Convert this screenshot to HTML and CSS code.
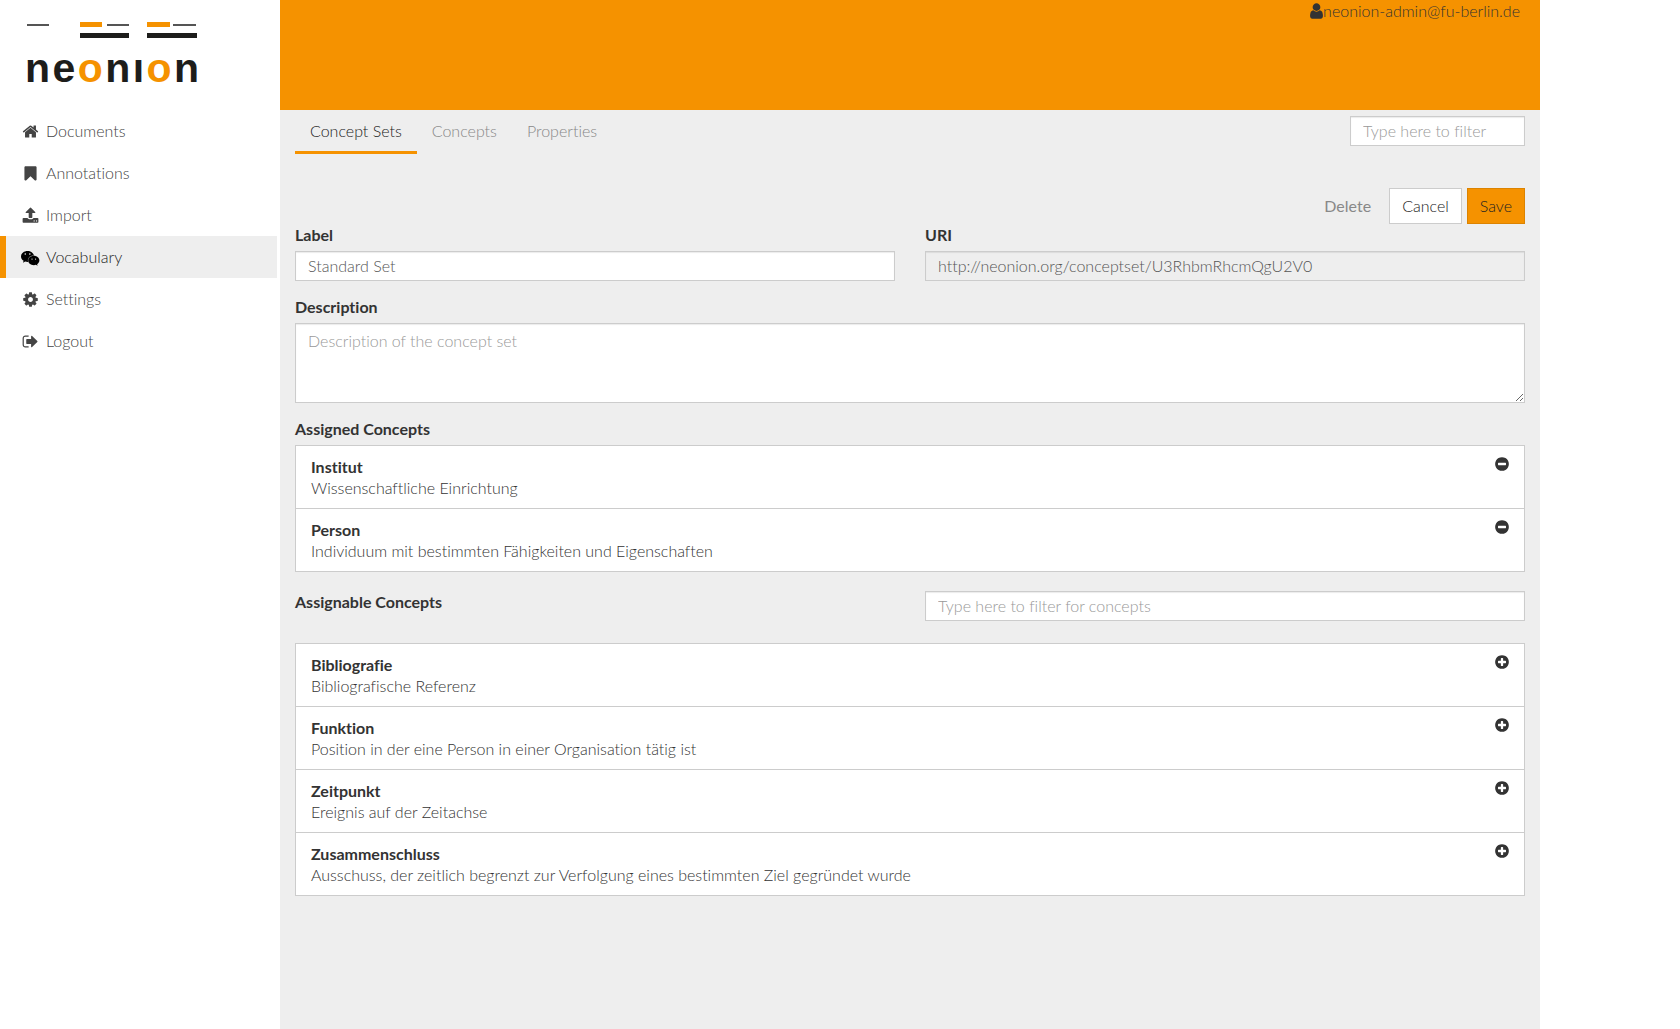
FILE: index.html
```html
<!DOCTYPE html>
<html lang="en">
<head>
<meta charset="utf-8">
<title>neonion – Vocabulary</title>
<link rel="stylesheet" href="styles.css">
</head>
<body>
<svg class="sprite" aria-hidden="true">
  <symbol id="home" viewBox="0 0 1664 1792"><path d="M1408 992v480q0 26-19 45t-45 19H960v-384H704v384H320q-26 0-45-19t-19-45V992q0-1 .5-3t.5-3l575-474 575 474q1 2 1 6zm223-69l-62 74q-8 9-21 11h-3q-13 0-21-7L832 424l-692 577q-12 8-24 7-13-2-21-11l-62-74q-8-10-7-23.500t11-21.500l719-599q32-26 76-26t76 26l244 204V288q0-14 9-23t23-9h192q14 0 23 9t9 23v408l219 182q10 8 11 21.500t-7 23.500z"/></symbol>
  <symbol id="bookmark" viewBox="0 0 1280 1792"><path d="M1164 256q23 0 44 9 33 13 52.500 41t19.500 62v1289q0 34-19.500 62t-52.500 41q-19 8-44 8-48 0-83-32L640 1312l-441 424q-36 33-83 33-23 0-44-9-33-13-52.500-41T0 1657V368q0-34 19.500-62T72 265q21-9 44-9z" transform="translate(0 -128)"/></symbol>
  <symbol id="upload" viewBox="0 0 1664 1792"><path d="M1280 1472q0-26-19-45t-45-19-45 19-19 45 19 45 45 19 45-19 19-45zm256 0q0-26-19-45t-45-19-45 19-19 45 19 45 45 19 45-19 19-45zm128-224v320q0 40-28 68t-68 28H96q-40 0-68-28t-28-68v-320q0-40 28-68t68-28h427q21 56 70.500 92t110.500 36h256q61 0 110.500-36t70.500-92h427q40 0 68 28t28 68zm-325-648q-17 40-59 40h-256v448q0 26-19 45t-45 19H704q-26 0-45-19t-19-45V640H384q-42 0-59-40-17-39 14-69l448-448q18-19 45-19t45 19l448 448q31 30 14 69z"/></symbol>
  <symbol id="chat" viewBox="0 0 2048 1792"><path fill-rule="evenodd" d="M700 200C310 200 0 455 0 785c0 190 105 345 280 465l-70 210 244-122c87 17 157 35 246 35 22 0 44-1 65-3-14-47-22-96-22-147 0-301 259-546 586-546 22 0 45 2 67 4C1336 400 1043 200 700 200zM461 430a86 86 0 1 1 0 172 86 86 0 0 1 0-172zm489 0a86 86 0 1 1 0 172 86 86 0 0 1 0-172zM1392 720c-370 0-622 233-622 502 0 276 252 502 622 502 70 0 140-17 208-34l190 104-52-173c140-105 244-244 244-399 0-269-270-502-590-502zm-205 275a70 70 0 1 1 0 140 70 70 0 0 1 0-140zm380 0a70 70 0 1 1 0 140 70 70 0 0 1 0-140z"/></symbol>
  <symbol id="cog" viewBox="0 0 1536 1792"><path d="M1024 896q0-106-75-181t-181-75-181 75-75 181 75 181 181 75 181-75 75-181zm512-109v222q0 12-8 23t-20 13l-185 28q-19 54-39 91 35 50 107 138 10 12 10 25t-9 23q-27 37-99 108t-94 71q-12 0-26-9l-138-108q-44 23-91 38-16 136-29 186-7 28-36 28H657q-14 0-24.500-8.500T621 1634l-28-184q-49-16-90-37l-141 107q-10 9-25 9-14 0-25-11-126-114-165-168-7-10-7-23 0-12 8-23 15-21 51-66.500t54-70.500q-27-50-41-99L29 1040q-13-2-21-12.500T0 1004V782q0-12 8-23t19-13l186-28q14-46 39-92-40-57-107-138-10-12-10-24 0-10 9-23 26-36 98.500-107.500T337 262q13 0 26 10l138 107q44-23 91-38 16-136 29-186 7-28 36-28h222q14 0 24.500 8.500T915 157l28 184q49 16 90 37l142-107q9-9 24-9 13 0 25 10 129 119 165 170 7 8 7 22 0 12-8 23-15 21-51 66.500t-54 70.500q26 50 41 98l183 28q13 2 21 12.500t8 23.500z"/></symbol>
  <symbol id="logout" viewBox="0 0 1664 1792"><path d="M640 1440q0 4 1 20t.5 26.500-3 23.500-10 19.500-20.500 6.500H288q-119 0-203.500-84.500T0 1248V544q0-119 84.500-203.500T288 256h320q13 0 22.500 9.500T640 288q0 4 1 20t.5 26.500-3 23.500-10 19.500T608 384H288q-66 0-113 47t-47 113v704q0 66 47 113t113 47h312l11.500 1 11.500 3 8 5.500 7 9zM1568 896q0 26-19 45l-544 544q-19 19-45 19t-45-19-19-45v-288H448q-26 0-45-19t-19-45V704q0-26 19-45t45-19h448V352q0-26 19-45t45-19 45 19l544 544q19 19 19 45z"/></symbol>
  <symbol id="user" viewBox="0 0 1280 1792"><path d="M1280 1399q0 109-62.500 187t-150.500 78H213q-88 0-150.500-78T0 1399q0-85 8.500-160.500t31.500-152T98.500 955.500t94-89T327 832q131 128 313 128t313-128q76 0 134.500 34.500t94 89 58.500 131 31.500 152 8.500 160.500zM1024 512q0 159-112.500 271.500T640 896 368.500 783.500 256 512t112.500-271.500T640 128t271.500 112.500T1024 512z"/></symbol>
  <symbol id="minus" viewBox="0 0 1536 1792"><path d="M1216 960V832q0-26-19-45t-45-19H384q-26 0-45 19t-19 45v128q0 26 19 45t45 19h768q26 0 45-19t19-45zm320-64q0 209-103 385.500T1153.500 1561 768 1664t-385.500-103T103 1281.500 0 896t103-385.500T382.500 231 768 128t385.500 103T1433 510.500 1536 896z"/></symbol>
  <symbol id="plus" viewBox="0 0 1536 1792"><path d="M1216 960V832q0-26-19-45t-45-19H896V512q0-26-19-45t-45-19H704q-26 0-45 19t-19 45v256H384q-26 0-45 19t-19 45v128q0 26 19 45t45 19h256v256q0 26 19 45t45 19h128q26 0 45-19t19-45v-256h256q26 0 45-19t19-45zm320-64q0 209-103 385.500T1153.500 1561 768 1664t-385.500-103T103 1281.500 0 896t103-385.500T382.500 231 768 128t385.500 103T1433 510.500 1536 896z"/></symbol>
</svg>

<div class="app">
  <aside class="sidebar">
    <a class="brand" href="#" aria-label="neonion home">
      <svg class="bars" viewBox="0 0 170 18" aria-hidden="true">
        <g fill="#555"><path d="M0 2h22v2H0zM80 2h22v2H80zM146 2h23v2h-23z"/></g>
        <g fill="#f59200"><path d="M53 0h22v5H53zM120 0h23v5h-23z"/></g>
        <g fill="#1d1d1b"><path d="M53 11h49v5H53zM120 11h50v5h-50z"/></g>
      </svg>
      <span class="wordmark"><span>n</span><span>e</span><span class="o">o</span><span>n</span><span>ı</span><span class="o">o</span><span>n</span></span>
    </a>
    <nav class="menu">
      <a href="#"><svg class="icon"><use href="#home"/></svg>Documents</a>
      <a href="#"><svg class="icon"><use href="#bookmark"/></svg>Annotations</a>
      <a href="#"><svg class="icon"><use href="#upload"/></svg>Import</a>
      <a href="#" class="active"><svg class="icon"><use href="#chat"/></svg>Vocabulary</a>
      <a href="#"><svg class="icon"><use href="#cog"/></svg>Settings</a>
      <a href="#"><svg class="icon"><use href="#logout"/></svg>Logout</a>
    </nav>
  </aside>

  <div class="page">
    <header class="topbar">
      <svg class="icon"><use href="#user"/></svg><span>neonion-admin@fu-berlin.de</span>
    </header>
    <main class="content">
      <div class="toolbar">
        <nav class="tabs">
          <a href="#" class="active">Concept Sets</a>
          <a href="#">Concepts</a>
          <a href="#">Properties</a>
        </nav>
        <input class="control filter" type="text" placeholder="Type here to filter" aria-label="Filter concept sets">
      </div>

      <form class="editor">
        <div class="actions">
          <button type="button" class="btn link">Delete</button>
          <button type="button" class="btn">Cancel</button>
          <button type="button" class="btn primary">Save</button>
        </div>
        <div class="columns">
          <div class="field">
            <label for="label">Label</label>
            <input class="control" id="label" type="text" value="Standard Set">
          </div>
          <div class="field">
            <label for="uri">URI</label>
            <input class="control" id="uri" type="text" value="http://neonion.org/conceptset/U3RhbmRhcmQgU2V0" readonly>
          </div>
        </div>
        <div class="field">
          <label for="description">Description</label>
          <textarea class="control" id="description" placeholder="Description of the concept set"></textarea>
        </div>
        <section class="field">
          <h2>Assigned Concepts</h2>
          <ul class="list">
            <li><div><strong>Institut</strong><p>Wissenschaftliche Einrichtung</p></div><button type="button" aria-label="Remove Institut"><svg class="icon"><use href="#minus"/></svg></button></li>
            <li><div><strong>Person</strong><p>Individuum mit bestimmten Fähigkeiten und Eigenschaften</p></div><button type="button" aria-label="Remove Person"><svg class="icon"><use href="#minus"/></svg></button></li>
          </ul>
        </section>
        <section class="assignable">
          <div class="columns">
            <h2><label for="concept-filter">Assignable Concepts</label></h2>
            <input class="control" id="concept-filter" type="text" placeholder="Type here to filter for concepts">
          </div>
          <ul class="list">
            <li><div><strong>Bibliografie</strong><p>Bibliografische Referenz</p></div><button type="button" aria-label="Add Bibliografie"><svg class="icon"><use href="#plus"/></svg></button></li>
            <li><div><strong>Funktion</strong><p>Position in der eine Person in einer Organisation tätig ist</p></div><button type="button" aria-label="Add Funktion"><svg class="icon"><use href="#plus"/></svg></button></li>
            <li><div><strong>Zeitpunkt</strong><p>Ereignis auf der Zeitachse</p></div><button type="button" aria-label="Add Zeitpunkt"><svg class="icon"><use href="#plus"/></svg></button></li>
            <li><div><strong>Zusammenschluss</strong><p>Ausschuss, der zeitlich begrenzt zur Verfolgung eines bestimmten Ziel gegründet wurde</p></div><button type="button" aria-label="Add Zusammenschluss"><svg class="icon"><use href="#plus"/></svg></button></li>
          </ul>
        </section>
      </form>
    </main>
  </div>
</div>
</body>
</html>
```
FILE: styles.css
```css
* { box-sizing: border-box; }

body {
  margin: 0;
  background: #fff;
  color: #333;
  font: 300 16px/21px Lato, "Liberation Sans", sans-serif;
  font-variant-ligatures: none;
}

a { color: inherit; text-decoration: none; }
h2, p, ul { margin: 0; padding: 0; }
.sprite { display: none; }
.icon { width: 16px; height: 16px; fill: currentColor; flex: none; }

.app {
  display: grid;
  grid-template-columns: 280px minmax(0, 1fr);
  max-width: 1540px;
  min-height: 100vh;
}

/* Sidebar */
.brand { display: block; height: 110px; padding: 22px 0 0 27px; }
.bars { display: block; width: 170px; height: 18px; }
.wordmark {
  display: flex;
  justify-content: space-between;
  width: 174px;
  margin: 5px 0 0 -2px;
  color: #1d1d1b;
  font: 700 41px/46px "Liberation Sans", Arial, sans-serif;
}
.wordmark .o { color: #f59200; }

.menu a {
  display: flex;
  align-items: center;
  gap: 6px;
  height: 42px;
  margin-right: 3px;
  padding: 0 0 2px 15px;
  border-left: 6px solid transparent;
  color: #444;
}
.menu .icon { width: 19px; height: 17px; margin-top: 2px; color: #444; }
.menu .active { border-color: #f59200; background: #eee; color: #222; }
.menu .active .icon { color: #000; }

/* Main area */
.page { display: flex; flex-direction: column; background: #eee; }
.topbar {
  display: flex;
  justify-content: flex-end;
  height: 110px;
  padding-right: 20px;
  background: #f59200;
}
.topbar .icon { width: 13px; height: 18px; margin-top: 2px; }
.content { padding: 0 15px 15px; }

.toolbar { display: flex; justify-content: space-between; height: 78px; }
.tabs { display: flex; height: 44px; }
.tabs a { padding: 10px 15px; border-bottom: 3px solid transparent; color: #888; }
.tabs .active { border-color: #f59200; color: #222; }
.filter.control { width: 175px; margin-top: 6px; }

.control {
  display: block;
  width: 100%;
  height: 30px;
  padding: 3px 12px 5px;
  border: 1px solid #ccc;
  border-radius: 0;
  background: #fff;
  box-shadow: inset 0 1px 1px rgba(0, 0, 0, .08);
  color: #555;
  font: inherit;
}
.control::placeholder { color: #999; opacity: 1; }
.control:read-only { background: #eee; }
textarea.control { height: 80px; padding-top: 6px; resize: vertical; }

.actions { display: flex; justify-content: flex-end; gap: 5px; }
.btn {
  height: 36px;
  padding: 0 12px 2px;
  border: 1px solid #ccc;
  background: #fff;
  color: #222;
  font: inherit;
}
.btn.primary { border-color: #dc8300; background: #f59200; }
.btn.link { border-color: transparent; background: none; color: #888; font-weight: 400; }

.columns { display: grid; grid-template-columns: 1fr 1fr; gap: 30px; }
.field { margin-bottom: 15px; }
.field label, .field h2, .columns h2 {
  display: block;
  margin-bottom: 6px;
  font-size: 16px;
  font-weight: 700;
  line-height: 21px;
}

.list { border: 1px solid #ccc; background: #fff; list-style: none; }
.list li {
  display: flex;
  justify-content: space-between;
  align-items: flex-start;
  padding: 10px 15px;
}
.list li + li { border-top: 1px solid #ccc; }
.list strong { font-weight: 700; }
.list button { display: flex; padding: 0; border: 0; background: none; color: #333; }
.list .icon { width: 14px; }
.assignable { padding-top: 4px; }
.assignable .columns { margin-bottom: 22px; }
```
